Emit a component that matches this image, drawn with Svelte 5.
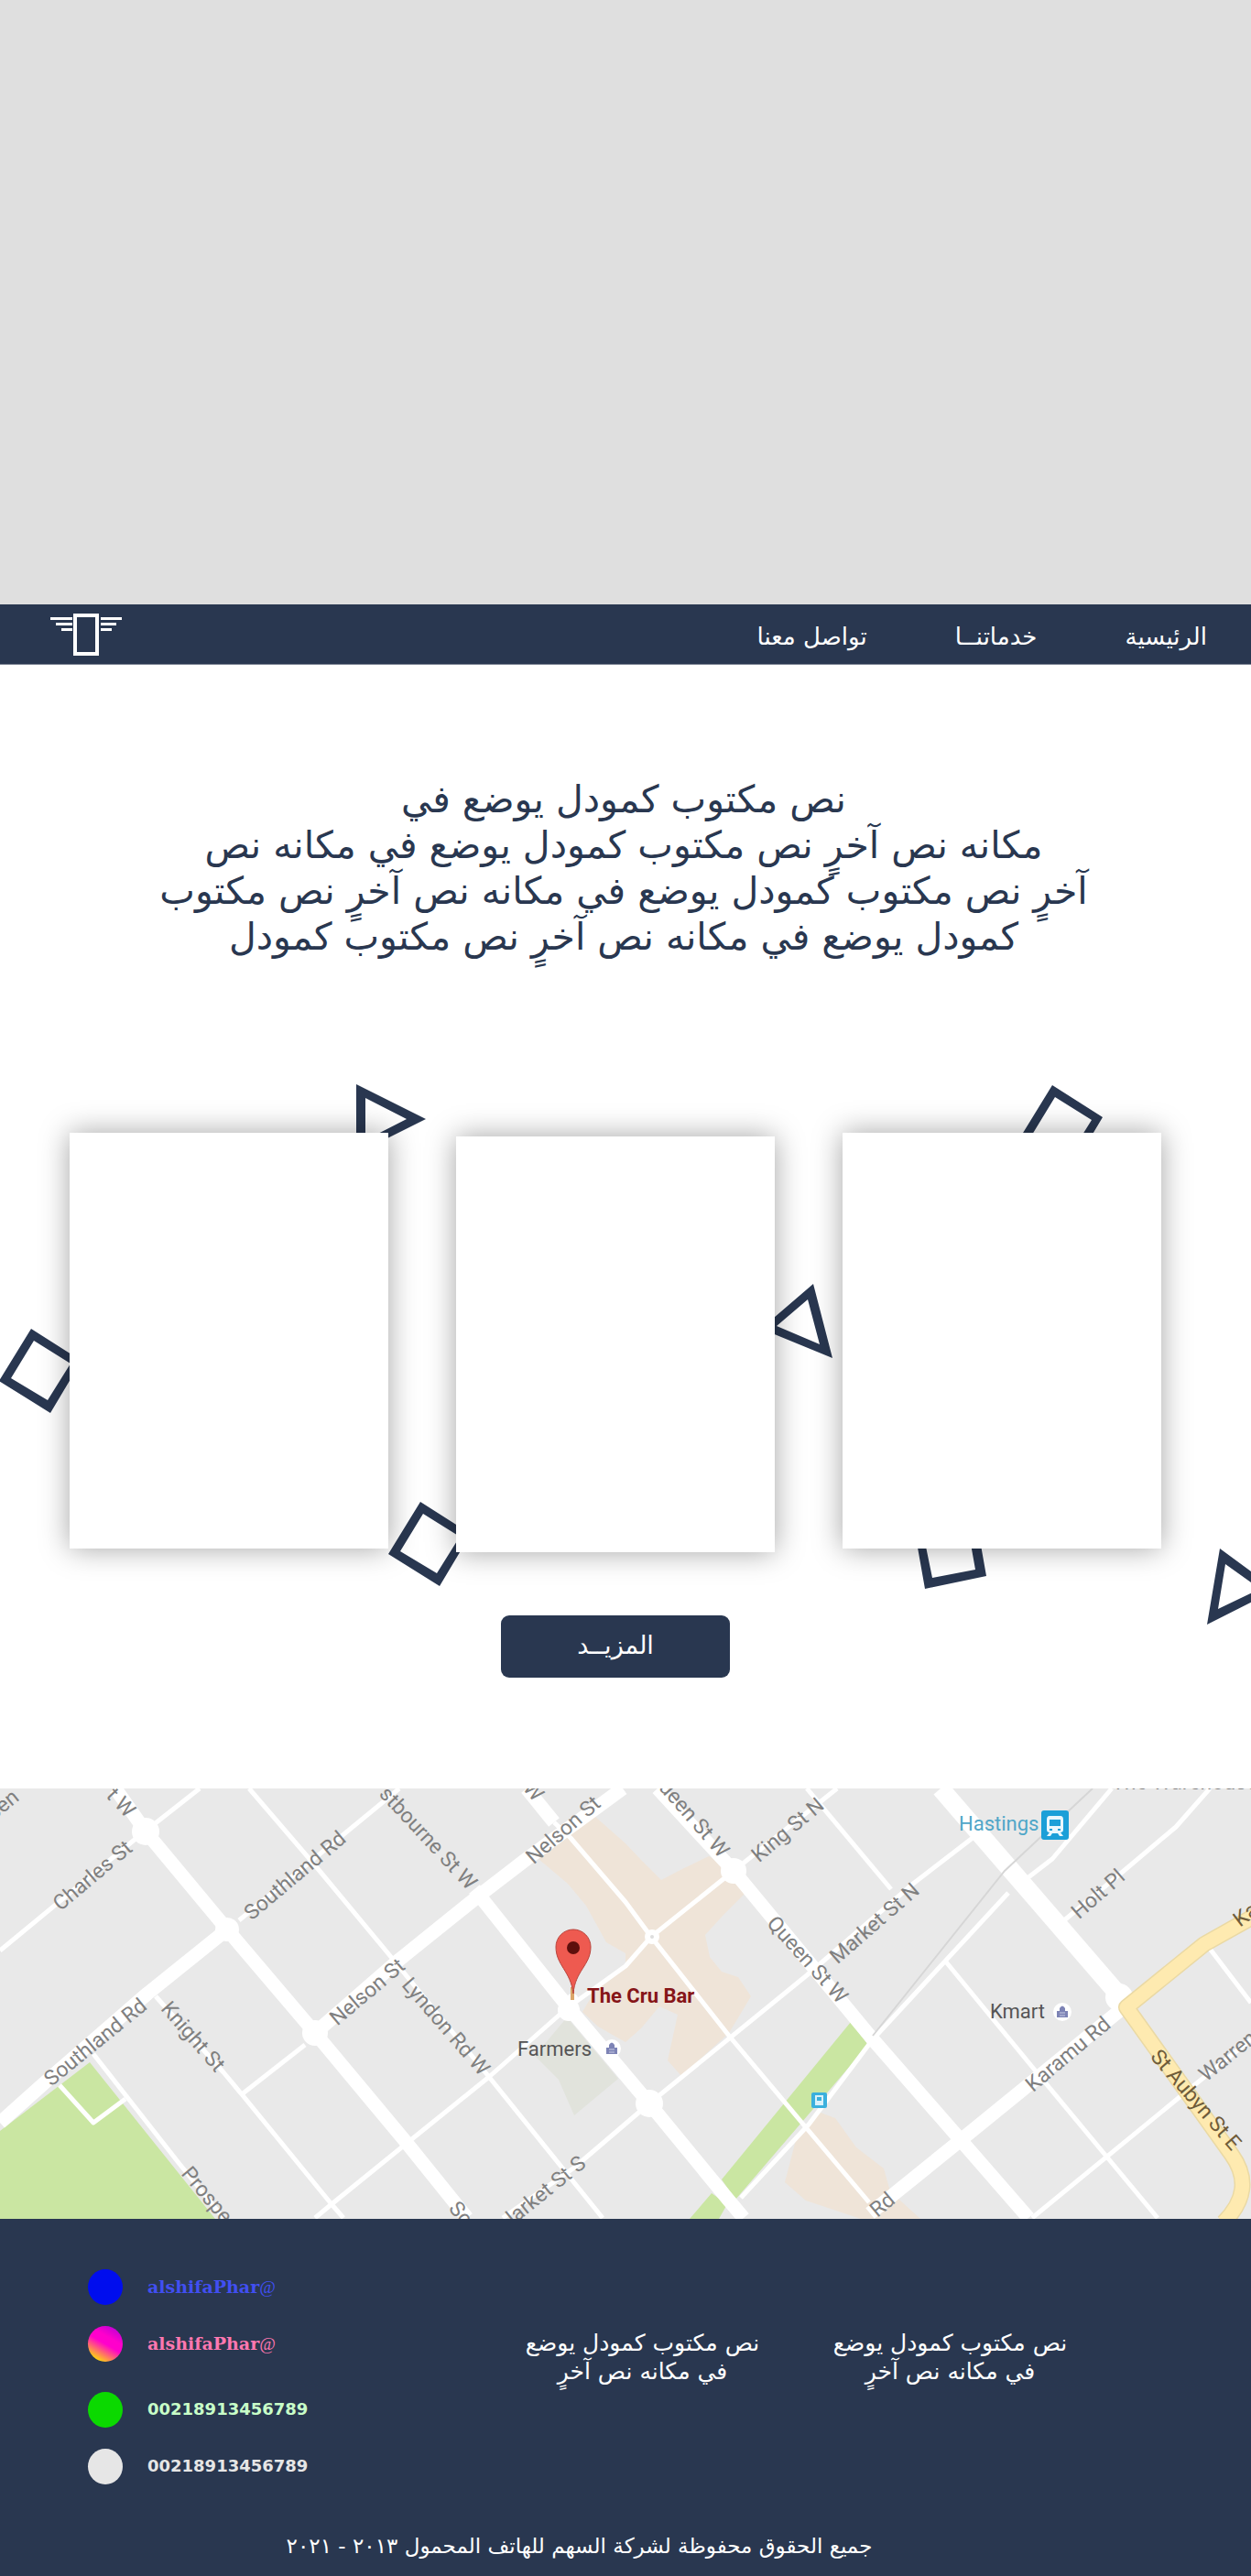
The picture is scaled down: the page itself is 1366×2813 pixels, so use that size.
<script lang="ts">
  const nav = ['الرئيسية', 'خدماتنــا', 'تواصل معنا'];
  const intro = [
    'نص مكتوب كمودل يوضع في',
    'مكانه نص آخرٍ نص مكتوب كمودل يوضع في مكانه نص',
    'آخرٍ نص مكتوب كمودل يوضع في مكانه نص آخرٍ نص مكتوب',
    'كمودل يوضع في مكانه نص آخرٍ نص مكتوب كمودل',
  ];
  const squares = ['translate(0 0)', 'translate(425 189)', 'translate(1115 -266)'];

  // street labels: text, x, y, rotation, anchor
  const streets: [string, number, number, number, string][] = [
    ['Charles St', 106, 101, -40, 'middle'],
    ['Southland Rd', 327, 101, -40, 'middle'],
    ['stbourne St W', 511, 112, 47, 'end'],
    ['Nelson St', 620, 51, -41, 'middle'],
    ['Nelson St', 406, 228, -40, 'middle'],
    ['Lyndon Rd W', 481, 265, 49, 'middle'],
    ['Knight St', 205, 276, 49, 'middle'],
    ['Southland Rd', 109, 283, -39, 'middle'],
    ['Prospec', 197, 421, 50, 'start'],
    ['So', 489, 459, 50, 'start'],
    ['larket St S', 641, 412, -39, 'end'],
    ['scen', 22, 12, -39, 'end'],
    ['t W', 138, 33, 47, 'end'],
    ['W', 570, 0, 49, 'start'],
    ['ueen St W', 786, 77, 49, 'end'],
    ['King St N', 865, 51, -40, 'middle'],
    ['Queen St W', 876, 192, 48, 'middle'],
    ['Market St N', 960, 153, -41, 'middle'],
    ['Holt Pl', 1204, 121, -41, 'middle'],
    ['Karamu Rd', 1171, 296, -40, 'middle'],
    ['Warren', 1317, 321, -39, 'start'],
    ['Rd', 958, 469, -40, 'start'],
    ['The Warehouse', 1214, 1, 0, 'start'],
  ];
  const thin = [
    'M0 177 148 55 218 0',
    'M261 144 418 15 436 0',
    'M272 0 344 84 427 184 534 315 658 469',
    'M170 227 244 310 264 334 362 454 375 469',
    'M264 334 333 280',
    'M344 469 362 454 436 394 534 315 619 240 683 194 711 162 801 90 914 0',
    'M549 469 627 414 709 344 881 204 997 104 1062 54',
    'M102 290 196 410 244 469',
    'M65 324 102 365 137 339',
    'M881 0 973 110',
    'M1031 187 1132 310 1210 404 1264 469',
    'M1127 469 1288 337 1366 274',
    'M1321 175 1366 234',
    'M1162 144 1227 90 1284 42 1321 0',
    'M1214 0 1149 77 1123 97',
    'M1101 114 953 274 883 367 809 447',
    'M605 37 623 54 683 124 711 162 796 270 879 369 949 452',
  ];
  const thick = [
    'M126 0 159 47 248 154 344 267 444 387 510 469',
    'M0 365 48 322 161 224 248 154',
    'M344 267 436 187 523 117 575 77 680 0',
    'M518 110 619 237 709 344 796 450 812 469',
    'M718 0 801 90 953 274 1049 384 1123 469',
    'M1227 239 1119 327 1049 384 950 464',
    'M575 0 605 37',
  ];
  const hubs = [[159, 47, 15], [248, 154, 13], [344, 267, 14], [801, 90, 14], [709, 344, 15], [621, 242, 12], [1222, 228, 15]];
</script>

<main dir="rtl">
  <div class="hero"></div>

  <header>
    <nav>
      {#each nav as item}<a href="#top">{item}</a>{/each}
    </nav>
    <svg class="logo" viewBox="0 0 78 46" width="78" height="46" role="img" aria-label="Logo">
      <rect x="27" y="2" width="24" height="42" fill="none" stroke="#fff" stroke-width="4" />
      <path fill="#fff" d="M0 4h24v3H0zM6 10h18v3H6zM12 16h12v3H12zM55 4h23v3H55zM55 10h17v3H55zM55 16h12v3H55z" />
    </svg>
  </header>

  <p class="intro">
    {#each intro as line}<span>{line}</span>{/each}
  </p>

  <section class="showcase">
    <svg class="shapes" viewBox="0 0 1366 640" aria-hidden="true">
      <g fill="#293750" fill-rule="evenodd">
        <path d="M389 24 465 62 389 100zM399 39 444 62 399 85z" />
        {#each squares as place}
          <path transform={place} d="M34 291-1 348 55 383 89 326zM37 304 12 345 52 369 77 329z" />
        {/each}
        <path d="M888 242 909 323 831 291zM882 259 848 288 895 308z" />
        <path d="M1010 575 1077 561 1066 499 999 513zM1018 563 1065 554 1057 509 1009 519z" />
        <path d="M1332 531 1393 576 1318 614zM1338 548 1376 575 1330 597z" />
      </g>
    </svg>
    <div class="cards">
      <article></article>
      <article></article>
      <article></article>
    </div>
    <button type="button">المزيــد</button>
  </section>

  <svg class="map" viewBox="0 0 1366 470" preserveAspectRatio="xMidYMid slice" role="img" aria-label="Map">
    <rect width="1366" height="470" fill="#e9e9e9" />
    <path fill="#cae6a2" d="M98 299 235 470H0V374zM929 255 948 280 803 449 788 427zM777 442 794 454 785 470H753z" />
    <g fill="#efe4d8">
      <path d="M588 77 649 30 683 60 700 78 722 100 745 88 774 74 800 88 814 114 790 138 770 160 775 184 788 200 806 206 820 227 796 267 744 314 729 297 740 247 720 238 700 262 683 277 653 260 636 244 650 220 683 196 683 180 662 168 640 128 620 104z" />
      <path d="M896 354 912 360 935 392 965 415 972 440 1005 470H940L880 450 857 430 870 380z" />
    </g>
    <path fill="#e1e3dc" d="M619 250 675 317 627 357 610 318 584 292z" />
    <g fill="none" stroke="#fff" stroke-linejoin="round">
      {#each thin as d}<path {d} stroke-width="5" />{/each}
      {#each thick as d}<path {d} stroke-width="15" />{/each}
      <path d="M1027 0 1223 227" stroke-width="20" />
    </g>
    {#each hubs as [cx, cy, r]}<circle {cx} {cy} {r} fill="#fff" />{/each}
    <circle cx="712" cy="162" r="8" fill="#fff" />
    <circle cx="712" cy="162" r="2" fill="#ddd" />
    <path d="M1193 0 1097 90 953 270" fill="none" stroke="#d6d6d6" stroke-width="2" />
    <g fill="none" stroke-linejoin="round">
      <path d="M1372 138 1315 170 1230 239 1345 400Q1372 438 1336 474" stroke="#ead9a4" stroke-width="18" />
      <path d="M1372 138 1315 170 1230 239 1345 400Q1372 438 1336 474" stroke="#feeab0" stroke-width="15" />
    </g>
    <g class="street">
      {#each streets as [label, x, y, angle, anchor]}
        <text text-anchor={anchor} transform="translate({x} {y}) rotate({angle})">{label}</text>
      {/each}
    </g>
    <g class="street avenue">
      <text text-anchor="middle" transform="translate(1300 345) rotate(49)">St Aubyn St E</text>
      <text transform="translate(1354 152) rotate(-37)">Ka</text>
    </g>
    <g class="place">
      <text x="565" y="292">Farmers</text>
      <text x="1081" y="251">Kmart</text>
      <text class="station" x="1047" y="46">Hastings</text>
      <text class="venue" x="641" y="234">The Cru Bar</text>
    </g>
    {#each [[668, 284], [1160, 244]] as [x, y]}
      <g transform="translate({x} {y})">
        <circle r="10" fill="#fff" />
        <path d="M-6-1H6V6H-6zM-3-1V-4Q0-9 3-4V-1" fill="#7d83b5" />
        <path d="M-3 1H3M-3 4H3" stroke="#c9cce4" />
      </g>
    {/each}
    <rect x="1137" y="24" width="30" height="32" rx="3" fill="#1b9fd8" />
    <path fill="#e9f7fd" fill-rule="evenodd" d="M1146 30H1158Q1161 30 1161 34V45Q1161 48 1158 48L1161 52H1157L1155 49H1149L1147 52H1143L1146 48Q1143 48 1143 45V34Q1143 30 1146 30zM1146 34V41H1158V34zM1146 44V46H1149V44zM1155 44V46H1158V44z" />
    <rect x="886" y="332" width="17" height="17" rx="2" fill="#3bb0dd" />
    <path fill="#d9f1fa" fill-rule="evenodd" d="M890 335H899V346H890zM892 337V341H897V337z" />
    <ellipse cx="625" cy="229" rx="6" ry="5" fill="#fff" />
    <path d="M625 217V231" stroke="#dba76a" stroke-width="4" />
    <path d="M626 224C623 199 607 193 607 173A19 19 0 0 1 645 173C645 193 628 199 626 224z" fill="#ee5a50" stroke="#b9443c" />
    <circle cx="626" cy="174" r="7" fill="#5e0f0c" />
  </svg>

  <footer>
    <div class="info">
      <p>نص مكتوب كمودل يوضع<br />في مكانه نص آخرٍ</p>
      <p>نص مكتوب كمودل يوضع<br />في مكانه نص آخرٍ</p>
      <ul dir="ltr">
        <li><i class="dot facebook"></i><a class="handle blue" href="#facebook">alshifaPhar<span>@</span></a></li>
        <li><i class="dot instagram"></i><a class="handle pink" href="#instagram">alshifaPhar<span>@</span></a></li>
        <li><i class="dot whatsapp"></i><a class="green" href="tel:00218913456789">00218913456789</a></li>
        <li><i class="dot phone"></i><a class="gray" href="tel:00218913456789">00218913456789</a></li>
      </ul>
    </div>
    <p class="copyright">جميع الحقوق محفوظة لشركة السهم للهاتف المحمول ٢٠١٣ - ٢٠٢١</p>
  </footer>
</main>

<style>
  :global(body) {
    margin: 0;
    background: #fff;
  }
  main {
    overflow: hidden;
    font-family: 'DejaVu Sans', sans-serif;
    color: #293750;
  }
  a {
    color: inherit;
    text-decoration: none;
  }
  p {
    margin: 0;
  }
  .hero {
    height: 660px;
    background: #dfdfdf;
  }
  header {
    display: flex;
    justify-content: space-between;
    align-items: center;
    height: 65px;
    padding: 0 48px 0 55px;
    background: #293750;
    border-bottom: 1px solid #7c8493;
    color: #fff;
  }
  nav {
    display: flex;
    gap: 96px;
    font-size: 26px;
    line-height: 32px;
    padding-top: 4px;
  }
  .intro {
    padding: 122px 28px 0 24px;
    font-size: 41px;
    line-height: 50px;
    text-align: center;
  }
  .intro span {
    display: block;
    white-space: nowrap;
  }
  .showcase {
    position: relative;
    display: flex;
    flex-direction: column;
    align-items: center;
    margin-top: 112px;
    padding: 77px 0 121px;
  }
  .shapes {
    position: absolute;
    top: 0;
    left: 0;
    width: 100%;
  }
  .cards {
    position: relative;
    box-sizing: border-box;
    width: 100%;
    display: grid;
    grid-template-columns: repeat(3, 1fr);
    align-items: start;
    gap: 74px;
    padding: 0 98px 0 76px;
  }
  article {
    aspect-ratio: 348 / 454;
    background: #fff;
    box-shadow: 0 0 30px rgba(0, 0, 0, 0.36);
  }
  article:nth-child(2) {
    margin-top: 4px;
  }
  button {
    position: relative;
    width: 250px;
    height: 68px;
    margin: 69px 22px 0 0;
    padding: 0 0 4px;
    border: 0;
    border-radius: 9px;
    background: #293750;
    color: #fff;
    font: 27px 'DejaVu Sans', sans-serif;
  }
  .map {
    display: block;
    width: 100%;
    font-family: Roboto, sans-serif;
    direction: ltr;
  }
  .street {
    font-size: 23px;
    fill: #808080;
  }
  .avenue {
    fill: #6f5c3a;
  }
  .place {
    font-size: 22px;
    fill: #555;
  }
  .place .station {
    fill: #4fa6c8;
  }
  .place .venue {
    font-weight: 700;
    fill: #861518;
  }
  footer {
    background: #293750;
    color: #fff;
    padding: 54px 0 17px;
  }
  .info {
    display: grid;
    grid-template-columns: 259px 259px 1fr;
    column-gap: 77px;
    padding: 0 199px 0 96px;
    font-size: 25px;
    line-height: 31px;
    text-align: center;
  }
  .info p {
    padding-top: 66px;
    white-space: nowrap;
  }
  ul {
    list-style: none;
    margin: 0;
    padding: 0;
    display: flex;
    flex-direction: column;
    gap: 22px;
  }
  li {
    display: flex;
    align-items: center;
    gap: 27px;
    height: 40px;
    font: 700 18px/24px 'DejaVu Sans', sans-serif;
  }
  li:nth-child(3) {
    margin-top: 10px;
  }
  .dot {
    width: 38px;
    height: 39px;
    border-radius: 50%;
  }
  .handle {
    font: 700 19px/28px 'DejaVu Serif', serif;
  }
  .handle span {
    font-family: 'Liberation Serif', serif;
    font-weight: 400;
    font-style: italic;
  }
  .facebook {
    background: #000dee;
  }
  .instagram {
    background: linear-gradient(30deg, #ffe600 10%, #ff00cc 50%, #ff00cc 65%, #b400d8 95%);
  }
  .whatsapp {
    background: #0bd900;
  }
  .phone {
    background: #e6e6e6;
  }
  .blue {
    color: #414ff2;
  }
  .pink {
    color: #ff78b0;
  }
  .green {
    color: #c8ffc8;
  }
  .gray {
    color: #e6e6e6;
  }
  .copyright {
    padding: 51px 101px 0 0;
    font-size: 23px;
    line-height: 32px;
    text-align: center;
  }
</style>
